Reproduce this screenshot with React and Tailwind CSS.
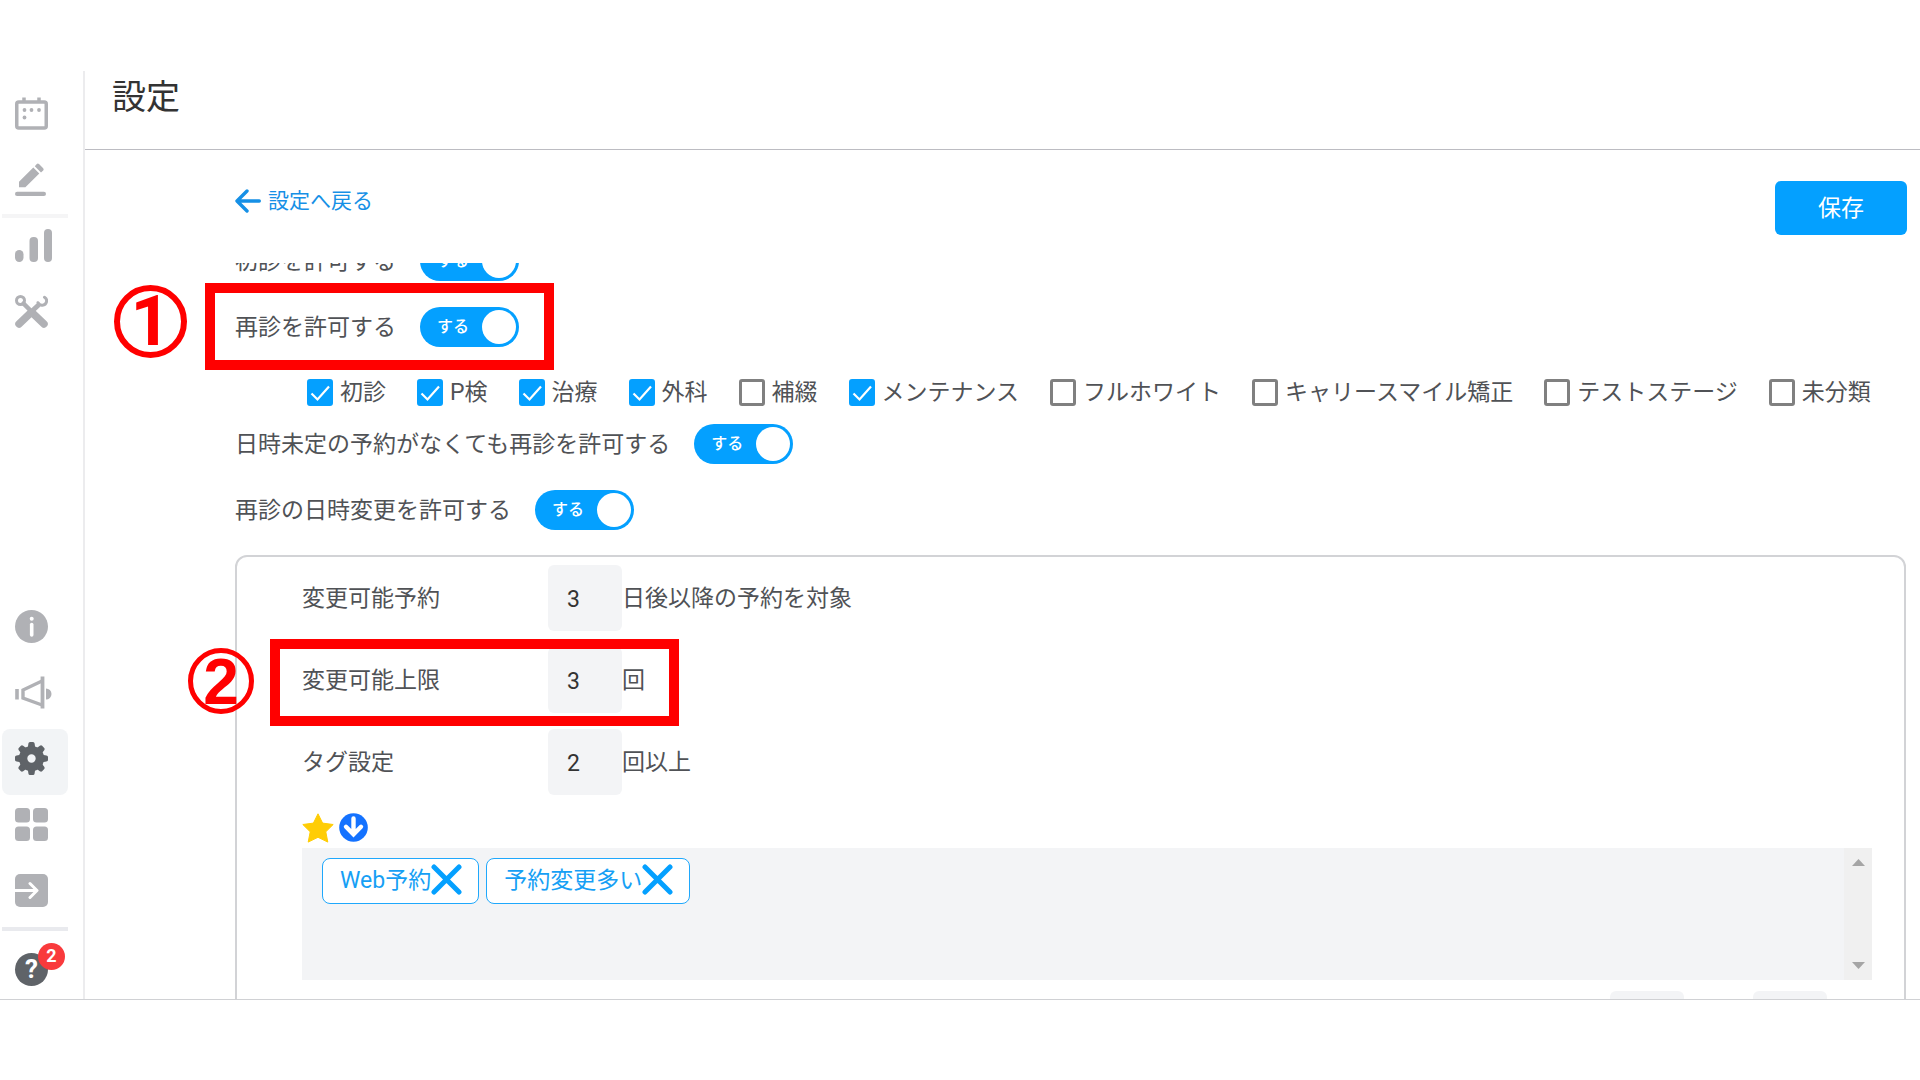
const courses = [
     { id: "first", name: "初診", checked: true },
     { id: "pcheck", name: "P検", checked: true },
     { id: "treatment", name: "治療", checked: true },
     { id: "surgery", name: "外科", checked: true },
     { id: "prosthesis", name: "補綴", checked: false },
     { id: "maintenance", name: "メンテナンス", checked: true },
     { id: "white", name: "フルホワイト", checked: false },
     { id: "carry", name: "キャリースマイル矯正", checked: false },
     { id: "test", name: "テストステージ", checked: false },
     { id: "none", name: "未分類", checked: false },
];

const tags = ["Web予約", "予約変更多い"];

function CalendarIcon() {
     return (
          <svg width="33" height="33" viewBox="0 0 33 33" fill="none">
               <rect x="1.75" y="5" width="29.5" height="26" rx="2" stroke="currentColor" strokeWidth="3.5" />
               <path d="M9 0.5v5M24 0.5v5" stroke="currentColor" strokeWidth="3.5" />
               <g fill="currentColor">
                    <circle cx="9.5" cy="13" r="1.9" />
                    <circle cx="16.5" cy="13" r="1.9" />
                    <circle cx="24" cy="13" r="1.9" />
                    <circle cx="9.5" cy="20.5" r="1.9" />
               </g>
          </svg>
     );
}

function PencilIcon() {
     return (
          <svg width="33" height="33" viewBox="0 0 33 33" fill="currentColor">
               <path d="M4 24.300v-5.600L18.300 4.400l6 6L10.400 24.300zM19.800 3.200l2-2.200q1-1 2.200 0l4.200 4.200q1 1.200 0 2.200l-2.200 2.200z" />
               <rect x="0" y="28.800" width="31" height="4.200" rx="2.100" />
          </svg>
     );
}

function BarsIcon() {
     return (
          <svg width="37" height="33" viewBox="0 0 37 33" fill="currentColor">
               <rect x="0" y="21" width="8.5" height="12" rx="4.2" />
               <rect x="14.5" y="8" width="8.5" height="25" rx="4" />
               <rect x="29" y="0" width="8" height="33" rx="4" />
          </svg>
     );
}

function ToolsIcon() {
     return (
          <svg width="33" height="33" viewBox="0 0 33 33" fill="none" stroke="currentColor" strokeLinecap="round">
               <circle cx="5.5" cy="5.5" r="4" strokeWidth="3" />
               <path d="M8.5 8.5L17 17" strokeWidth="4.5" />
               <path d="M17.5 18L29 29" strokeWidth="7.5" />
               <path d="M4 29L15.5 18" strokeWidth="7.5" />
               <path d="M16 17l7-6.5" strokeWidth="5" />
               <path d="M29.500 2.200a4.300 4.300 0 0 1-2 8a4.500 4.500 0 0 1-4.500-2.500" strokeWidth="3" />
          </svg>
     );
}

function InfoIcon() {
     return (
          <svg width="33" height="33" viewBox="0 0 33 33">
               <circle cx="16.5" cy="16.5" r="16.5" fill="currentColor" />
               <circle cx="16.7" cy="8.8" r="2" fill="#fff" />
               <path d="M16.7 14.5v10.500" stroke="#fff" strokeWidth="3.6" strokeLinecap="round" />
          </svg>
     );
}

function HornIcon() {
     return (
          <svg width="37" height="33" viewBox="0 0 37 33">
               <path d="M2 13v10.500" stroke="currentColor" strokeWidth="3.6" />
               <path d="M27.500 0.500v32" stroke="currentColor" strokeWidth="3.8" />
               <path d="M27 5L8 14v8l19 7" fill="none" stroke="currentColor" strokeWidth="3.4" />
               <path d="M31 12.500a5.500 5.500 0 0 1 0 11z" fill="currentColor" />
          </svg>
     );
}

function GearIcon() {
     const teeth = [0, 45, 90, 135, 180, 225, 270, 315];
     return (
          <svg width="33" height="33" viewBox="0 0 33 33">
               {teeth.map((angle) => (
                    <path key={angle} d="M12.600 7l.8-5.400q.2-1.600 1.600-1.600h3q1.400 0 1.600 1.600L20.400 7z" fill="currentColor" transform={`rotate(${angle} 16.5 16.5)`} />
               ))}
               <circle cx="16.5" cy="16.5" r="8.400" fill="none" stroke="currentColor" strokeWidth="8.400" />
          </svg>
     );
}

function GridIcon() {
     return (
          <svg width="33" height="33" viewBox="0 0 33 33" fill="currentColor">
               <rect x="0" y="0" width="15" height="14.500" rx="3.500" />
               <rect x="18" y="0" width="15" height="14.500" rx="3.500" />
               <rect x="0" y="18.500" width="15" height="14.500" rx="3.500" />
               <rect x="18" y="18.500" width="15" height="14.500" rx="3.500" />
          </svg>
     );
}

function ExitIcon() {
     return (
          <svg width="33" height="33" viewBox="0 0 33 33">
               <rect width="33" height="33" rx="5" fill="currentColor" />
               <path d="M0 16.500h21M15 9.500l7 7l-7 7" fill="none" stroke="#fff" strokeWidth="3" strokeLinejoin="round" strokeLinecap="round" />
          </svg>
     );
}

function BackIcon() {
     return (
          <svg width="26" height="24" viewBox="0 0 26 24" fill="none" stroke="currentColor" strokeWidth="3.4" strokeLinecap="round" strokeLinejoin="round">
               <path d="M24.300 12H2.500M12 2L2 12l10 10" />
          </svg>
     );
}

function SideItem({ label, active, children }) {
     return (
          <button type="button" aria-label={label} className={active ? "flex h-[66px] items-center rounded-lg bg-[#f2f4f6] pb-2 pl-[13px] text-[#5f6368]" : "flex h-[66px] items-center rounded-lg pb-2 pl-[13px] text-[#b0b1b5]"}>
               {children}
          </button>
     );
}

function Sidebar() {
     return (
          <aside className="flex w-[85px] shrink-0 flex-col border-r-2 border-[#ececee] pl-[2px] pr-[15px]">
               <nav className="mt-[13px] flex flex-col">
                    <SideItem label="カレンダー"><CalendarIcon /></SideItem>
                    <SideItem label="編集"><PencilIcon /></SideItem>
                    <hr className="-my-[2px] h-1 border-0 bg-[#f5f5f6]" />
                    <SideItem label="統計"><BarsIcon /></SideItem>
                    <SideItem label="ツール"><ToolsIcon /></SideItem>
               </nav>
               <nav className="mt-auto flex flex-col">
                    <SideItem label="情報"><InfoIcon /></SideItem>
                    <SideItem label="お知らせ"><HornIcon /></SideItem>
                    <SideItem label="設定" active={true}><GearIcon /></SideItem>
                    <SideItem label="アプリ"><GridIcon /></SideItem>
                    <SideItem label="ログアウト"><ExitIcon /></SideItem>
                    <hr className="h-1 border-0 bg-[#e9eaee]" />
                    <button type="button" aria-label="ヘルプ" className="relative mb-[13px] ml-[13px] mt-[22px] size-[33px] rounded-full bg-[#5f6368] text-[26px] leading-[33px] font-bold text-white">
                         ?
                         <span className="absolute -top-[10px] left-[23px] size-[27px] rounded-full bg-[#f93a3c] text-[18px] leading-[26px]">2</span>
                    </button>
               </nav>
          </aside>
     );
}

function Toggle({ id }) {
     return (
          <label htmlFor={id} className="relative flex h-10 w-[99px] shrink-0 items-center justify-between rounded-full bg-[#04a0ff] pl-[17px] pr-[3px] text-[16px] font-medium text-white">
               <input id={id} type="checkbox" role="switch" defaultChecked className="sr-only" />
               する
               <span className="size-[34px] rounded-full bg-white" />
          </label>
     );
}

function ToggleRow({ id, label, children }) {
     return (
          <div className="relative flex h-[66px] items-center gap-6">
               <label htmlFor={id} className="pt-[2px]">{label}</label>
               <Toggle id={id} />
               {children}
          </div>
     );
}

function CheckBox({ id, name, checked }) {
     return (
          <div className="flex items-center gap-[7px]">
               <span className="grid">
                    <input id={id} type="checkbox" defaultChecked={checked} className="peer col-start-1 row-start-1 h-[27px] w-[26px] appearance-none rounded-[3px] border-3 border-[#808080] bg-white checked:border-[#04a0ff] checked:bg-[#04a0ff]" />
                    <svg width="26" height="27" viewBox="0 0 26 27" fill="none" stroke="#fff" strokeWidth="2.2" className="pointer-events-none invisible col-start-1 row-start-1 peer-checked:visible">
                         <path d="M4.500 14.500l6 6L22 7.500" />
                    </svg>
               </span>
               <label htmlFor={id} className="whitespace-nowrap">{name}</label>
          </div>
     );
}

function NumberRow({ id, label, value, unit, children }) {
     return (
          <div className="relative flex h-[66px] items-center">
               <label htmlFor={id} className="w-[246px] pt-[2px]">{label}</label>
               <input id={id} type="text" defaultValue={value} className="h-full w-[74px] rounded-md bg-[#f3f4f6] pt-[2px] pl-[19px] text-[#333]" />
               <span className="pt-[2px]">{unit}</span>
               {children}
          </div>
     );
}

function Tag({ name }) {
     return (
          <li className="flex h-[46px] items-center rounded-lg border border-[#1fa8fc] bg-white pl-[17px] pr-4 text-[#169ff5]">
               {name}
               <button type="button" aria-label={name + "を削除"} className="mb-1">
                    <svg width="31" height="31" viewBox="0 0 31 31" stroke="#04a0ff" strokeWidth="5" strokeLinecap="round">
                         <path d="M3 3l25 25M28 3L3 28" />
                    </svg>
               </button>
          </li>
     );
}

export default function App() {
     return (
          <div className="flex h-screen flex-col overflow-hidden bg-white pt-[71px] pb-20 font-['Roboto','Noto_Sans_CJK_JP',sans-serif] text-[23px] leading-8 text-[#505256]" lang="ja">
               <div className="flex min-h-0 flex-1 border-b border-[#d0d1d4]">
                    <Sidebar />
                    <main className="flex min-w-0 flex-1 flex-col">
                         <header className="h-[79px] shrink-0 border-b border-[#bcbcc2] pl-[27px]">
                              <h1 className="text-[34px] leading-[52px] text-[#333]">設定</h1>
                         </header>
                         <div className="flex h-[113px] shrink-0 items-start justify-between pt-[31px] pr-[13px] pl-[150px]">
                              <a href="#settings" className="mt-1 flex items-center gap-[7px] text-[21px] text-[#1690e6]">
                                   <BackIcon />
                                   設定へ戻る
                              </a>
                              <button type="button" className="h-[54px] w-[132px] rounded-md bg-[#04a0ff] pt-[2px] text-white">保存</button>
                         </div>
                         <form className="min-h-0 flex-1 overflow-hidden pr-[14px] pl-[150px]">
                              <div className="-mt-[35px]">
                                   <ToggleRow id="allowFirst" label="初診を許可する" />
                                   <ToggleRow id="allowRevisit" label="再診を許可する">
                                        <div className="pointer-events-none absolute -top-[11px] -left-[30px] h-[87px] w-[349px] border-10 border-[#ff0000]" />
                                        <div className="absolute -top-[9px] -left-[121px] size-[73px] rounded-full border-6 border-[#ff0000] text-center text-[70px] leading-[61px] font-bold text-[#ff0000]">1</div>
                                   </ToggleRow>
                                   <div className="flex h-[51px] items-center gap-[31px] pt-[14px] pl-[72px]">
                                        {courses.map((course) => (
                                             <CheckBox key={course.id} id={course.id} name={course.name} checked={course.checked} />
                                        ))}
                                   </div>
                                   <ToggleRow id="allowUndated" label="日時未定の予約がなくても再診を許可する" />
                                   <ToggleRow id="allowChange" label="再診の日時変更を許可する" />
                                   <section className="mt-3 rounded-xl border-2 border-[#d2d3d6] pt-2 pr-8 pb-8 pl-[65px]">
                                        <div className="flex flex-col gap-4">
                                             <NumberRow id="changeDays" label="変更可能予約" value="3" unit="日後以降の予約を対象" />
                                             <NumberRow id="changeLimit" label="変更可能上限" value="3" unit="回">
                                                  <div className="pointer-events-none absolute -top-2 -left-8 h-[87px] w-[409px] border-10 border-[#ff0000]" />
                                                  <div className="absolute top-px -left-[114px] size-[66px] rounded-full border-5 border-[#ff0000] text-center font-['Liberation_Sans',sans-serif] text-[64px] leading-[58px] font-bold text-[#ff0000]">2</div>
                                             </NumberRow>
                                             <NumberRow id="tagCount" label="タグ設定" value="2" unit="回以上" />
                                        </div>
                                        <div className="mt-4 flex h-[37px] items-center gap-[5px] pb-1">
                                             <svg width="32" height="30" viewBox="0 0 32 30" fill="#ffcd05" stroke="#ffcd05" strokeWidth="1" strokeLinejoin="round">
                                                  <path d="M16 .8l4.600 9.300 10.600 1.400-7.400 7.300 2 10.300L16 24.300l-9.800 4.800 2-10.300L.8 11.500l10.600-1.400z" />
                                             </svg>
                                             <svg width="29" height="29" viewBox="0 0 29 29">
                                                  <circle cx="14.500" cy="14.500" r="14.300" fill="#1472ff" />
                                                  <path d="M14.500 5.500V21M7 13.800l7.500 7.500 7.500-7.500" fill="none" stroke="#fff" strokeWidth="4.400" strokeLinecap="round" />
                                             </svg>
                                        </div>
                                        <div className="flex h-[132px] justify-between bg-[#f3f4f6]">
                                             <ul className="flex gap-[7px] pt-[10px] pl-5">
                                                  {tags.map((tag) => (
                                                       <Tag key={tag} name={tag} />
                                                  ))}
                                             </ul>
                                             <div className="flex w-7 flex-col items-center justify-between bg-[#f0f0f0] py-[11px]">
                                                  <svg width="13" height="7" viewBox="0 0 13 7" fill="#a5a5a5"><path d="M0 7L6.500 0L13 7z" /></svg>
                                                  <svg width="13" height="7" viewBox="0 0 13 7" fill="#a5a5a5"><path d="M0 0L6.500 7L13 0z" /></svg>
                                             </div>
                                        </div>
                                        <div className="mt-[11px] flex justify-end gap-[69px] pr-[45px]">
                                             <input type="text" aria-label="下限" className="h-[66px] w-[74px] rounded-md bg-[#f3f4f6]" />
                                             <input type="text" aria-label="上限" className="h-[66px] w-[74px] rounded-md bg-[#f3f4f6]" />
                                        </div>
                                   </section>
                              </div>
                         </form>
                    </main>
               </div>
          </div>
     );
}
